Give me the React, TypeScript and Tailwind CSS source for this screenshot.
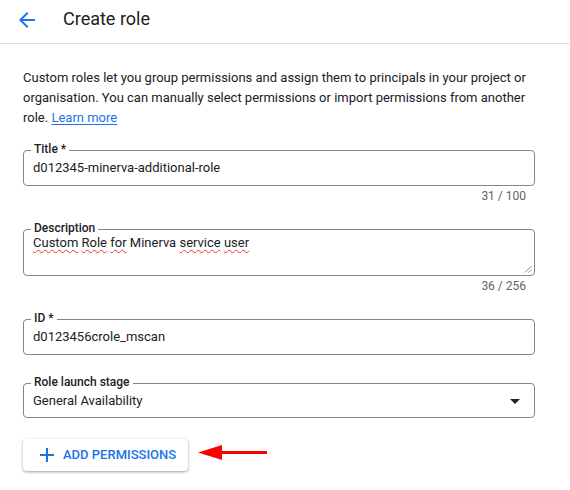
import { ReactNode } from "react";

const font = { fontFamily: "Roboto, 'Noto Sans', Arial, sans-serif" };

function Field({
  label,
  children,
  height = "h-[36px]",
}: {
  label: string;
  children: ReactNode;
  height?: string;
}) {
  return (
    <div
      className={`relative ${height} w-full rounded-[4px] border border-[#80868b] bg-white`}
    >
      <span className="absolute left-[7px] -top-[10px] bg-white px-[3px] text-[12px] font-medium leading-[16px] text-[#202124]">
        {label}
      </span>
      {children}
    </div>
  );
}

function Counter({ text }: { text: string }) {
  return (
    <div className="mt-[2px] pr-[9px] text-right text-[12px] leading-[16px] text-[#5f6368]">
      {text}
    </div>
  );
}

function Spell({ children }: { children: ReactNode }) {
  return (
    <span className="underline decoration-wavy decoration-[#e53935] decoration-[1px] underline-offset-[2px]">
      {children}
    </span>
  );
}

export default function App() {
  return (
    <div className="h-[490px] w-[570px] overflow-hidden bg-white" style={font}>
      {/* Header */}
      <div className="flex h-[44px] items-start border-b border-[#dadce0] pt-[7px]">
        <svg
          width="24"
          height="24"
          viewBox="0 0 24 24"
          className="ml-[15px] mt-[1px]"
          fill="#1a73e8"
        >
          <path d="M20 11H7.83l5.59-5.59L12 4l-8 8 8 8 1.41-1.41L7.83 13H20v-2z" />
        </svg>
        <h1 className="ml-[24px] text-[18px] leading-[24px] text-[#202124]">
          Create role
        </h1>
      </div>

      <div className="ml-[23px] w-[512px]">
        <p className="mt-[24px] text-[13px] leading-[20px] text-[#202124]">
          Custom roles let you group permissions and assign them to principals in
          your project or organisation. You can manually select permissions or
          import permissions from another role.{" "}
          <a className="text-[#1a73e8] underline underline-offset-[2px]">
            Learn more
          </a>
        </p>

        {/* Title */}
        <div className="mt-[22px]">
          <Field label="Title *">
            <div className="px-[9px] pt-[7px] text-[13px] leading-[20px] text-[#202124]">
              d012345-minerva-additional-role
            </div>
          </Field>
          <Counter text="31 / 100" />
        </div>

        {/* Description */}
        <div className="mt-[25px]">
          <Field label="Description" height="h-[47px]">
            <div className="px-[9px] pt-[3px] text-[13px] leading-[20px] text-[#202124]">
              <Spell>Custom</Spell> <Spell>Role</Spell> <Spell>for</Spell>{" "}
              Minerva <Spell>service</Spell> <Spell>user</Spell>
            </div>
            <svg
              width="8"
              height="8"
              viewBox="0 0 8 8"
              className="absolute bottom-[2px] right-[2px]"
              stroke="#8a8a8a"
              strokeWidth="1"
            >
              <line x1="1" y1="7.5" x2="7.5" y2="1" />
              <line x1="4.5" y1="7.5" x2="7.5" y2="4.5" />
            </svg>
          </Field>
          <Counter text="36 / 256" />
        </div>

        {/* ID */}
        <div className="mt-[25px]">
          <Field label="ID *">
            <div className="px-[9px] pt-[7px] text-[13px] leading-[20px] text-[#202124]">
              d0123456crole_mscan
            </div>
          </Field>
        </div>

        {/* Role launch stage */}
        <div className="mt-[28px]">
          <Field label="Role launch stage" height="h-[35px]">
            <div className="flex items-center justify-between pl-[9px] pr-[14px] pt-[7px] text-[13px] leading-[20px] text-[#202124]">
              <span>General Availability</span>
              <svg width="10" height="5" viewBox="0 0 10 5" fill="#202124">
                <path d="M0 0l5 5 5-5z" />
              </svg>
            </div>
          </Field>
        </div>

        {/* Add permissions */}
        <div className="mt-[21px] flex items-start">
          <button className="flex h-[32px] items-center rounded-[4px] bg-white pl-[17px] pr-[12px] text-[13px] font-medium uppercase text-[#1a73e8] shadow-[0_1px_2px_rgba(60,64,67,0.3),0_1px_3px_1px_rgba(60,64,67,0.15)]">
            <svg width="14" height="14" viewBox="0 0 14 14" fill="#1a73e8">
              <path d="M6 0h2v6h6v2H8v6H6V8H0V6h6z" />
            </svg>
            <span className="ml-[9px]">Add permissions</span>
          </button>
          <svg
            width="70"
            height="16"
            viewBox="0 0 70 16"
            className="ml-[10px] mt-[6px]"
          >
            <polygon points="0,7.5 24,0 24,15" fill="#ff0000" />
            <rect x="22" y="6" width="47" height="3" fill="#ff0000" />
          </svg>
        </div>
      </div>
    </div>
  );
}
